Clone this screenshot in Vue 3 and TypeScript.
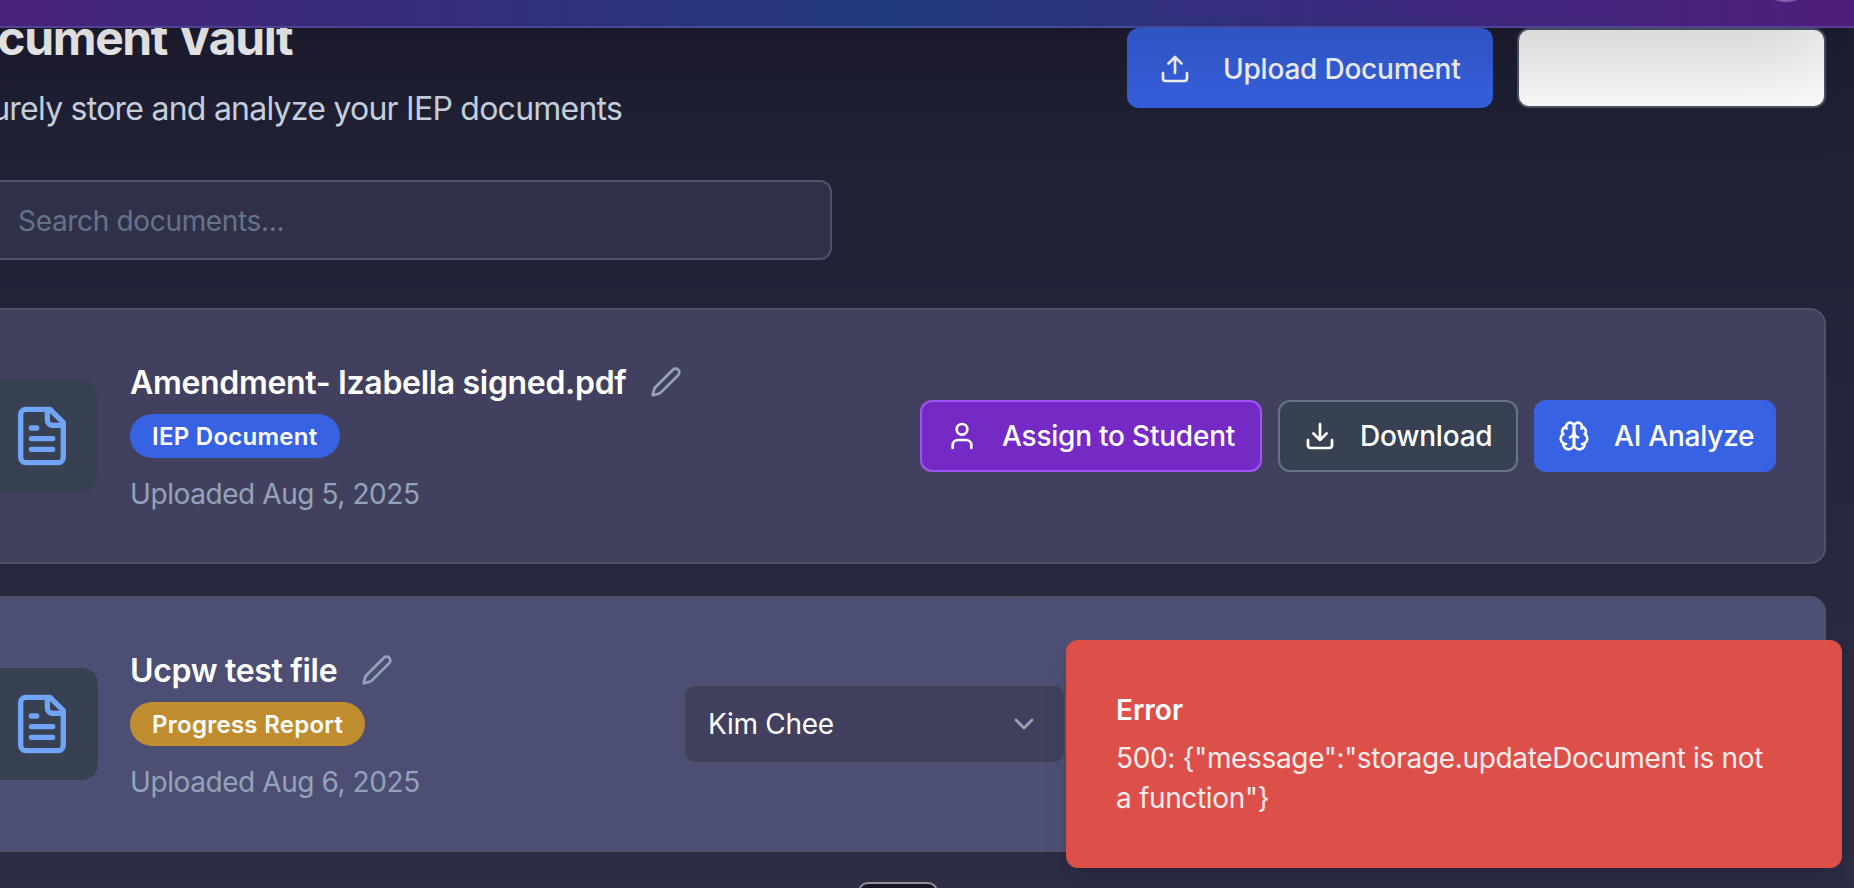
<script setup lang="ts">
interface VaultDocument {
  name: string
  kind: string
  tone: 'blue' | 'amber'
  uploaded: string
  assignee?: string
}

const documents: VaultDocument[] = [
  { name: 'Amendment- Izabella signed.pdf', kind: 'IEP Document', tone: 'blue', uploaded: 'Uploaded Aug 5, 2025' },
  { name: 'Ucpw test file', kind: 'Progress Report', tone: 'amber', uploaded: 'Uploaded Aug 6, 2025', assignee: 'Kim Chee' },
]
</script>

<template>
  <div class="screen">
    <header class="topbar">
      <span class="brand"></span>
      <nav class="tabs"><span class="tab"></span><span class="tab wide"></span></nav>
      <span class="avatar"></span>
    </header>

    <main class="page">
      <section class="heading">
        <div class="titles">
          <h1>Document Vault</h1>
          <p>Securely store and analyze your IEP documents</p>
        </div>
        <div class="heading-actions">
          <button class="btn upload">
            <svg class="icon" viewBox="0 0 24 24"><path d="M21 15v4a2 2 0 0 1-2 2H5a2 2 0 0 1-2-2v-4M17 8l-5-5-5 5M12 3v12" /></svg>
            <span>Upload Document</span>
          </button>
          <button class="btn blank"></button>
        </div>
      </section>

      <div class="search"><span>Search documents...</span></div>

      <section class="list">
        <article v-for="doc in documents" :key="doc.name" class="card" :class="{ active: doc.assignee }">
          <div class="thumb">
            <svg class="icon" viewBox="0 0 24 24"><path d="M15 2H6a2 2 0 0 0-2 2v16a2 2 0 0 0 2 2h12a2 2 0 0 0 2-2V7ZM14 2v4a2 2 0 0 0 2 2h4M10 9H8M16 13H8M16 17H8" /></svg>
          </div>
          <div class="info">
            <div class="name">
              <h3>{{ doc.name }}</h3>
              <svg class="icon pen" viewBox="0 0 24 24"><path d="M21.174 6.812a1 1 0 0 0-3.986-3.987L3.842 16.174a2 2 0 0 0-.5.83l-1.321 4.352a.5.5 0 0 0 .623.622l4.353-1.32a2 2 0 0 0 .83-.497z" /></svg>
            </div>
            <span class="badge" :class="doc.tone">{{ doc.kind }}</span>
            <p class="date">{{ doc.uploaded }}</p>
          </div>
          <div v-if="doc.assignee" class="select">
            <span>{{ doc.assignee }}</span>
            <svg class="icon" viewBox="0 0 24 24"><path d="m6 9 6 6 6-6" /></svg>
          </div>
          <div v-else class="actions">
            <button class="btn assign">
              <svg class="icon" viewBox="0 0 24 24"><path d="M19 21v-2a4 4 0 0 0-4-4H9a4 4 0 0 0-4 4v2" /><circle cx="12" cy="7" r="4" /></svg>
              <span>Assign to Student</span>
            </button>
            <button class="btn download">
              <svg class="icon" viewBox="0 0 24 24"><path d="M21 15v4a2 2 0 0 1-2 2H5a2 2 0 0 1-2-2v-4M7 10l5 5 5-5M12 15V3" /></svg>
              <span>Download</span>
            </button>
            <button class="btn analyze">
              <svg class="icon" viewBox="0 0 24 24">
                <path d="M12 5a3 3 0 1 0-5.997.125 4 4 0 0 0-2.526 5.77 4 4 0 0 0 .556 6.588A4 4 0 1 0 12 18Z" />
                <path d="M12 5a3 3 0 1 1 5.997.125 4 4 0 0 1 2.526 5.770 4 4 0 0 1-.556 6.588A4 4 0 1 1 12 18Z" />
                <path d="M15 13a4.500 4.500 0 0 1-3-4 4.500 4.500 0 0 1-3 4M17.599 6.500a3 3 0 0 0 .399-1.375M6.003 5.125A3 3 0 0 0 6.401 6.500M3.477 10.896a4 4 0 0 1 .585-.396M19.938 10.500a4 4 0 0 1 .585.396M6 18a4 4 0 0 1-1.967-.516M19.967 17.484A4 4 0 0 1 18 18" />
              </svg>
              <span>AI Analyze</span>
            </button>
          </div>
        </article>
      </section>
    </main>

    <div class="dock"></div>

    <aside class="toast">
      <strong>Error</strong>
      <p>500: {"message":"storage.updateDocument is not<br />a function"}</p>
    </aside>
  </div>
</template>

<style>
body { background: #2d2d45; overflow: hidden; }
</style>

<style scoped>
* { box-sizing: border-box; }
.screen {
  position: relative;
  height: 888px;
  overflow: hidden;
  color: #fff;
  font-family: Inter, "Liberation Sans", sans-serif;
  font-size: 28px;
  line-height: 40px;
  background: linear-gradient(#1e1e32, #2d2d46);
}
h1, h3, p { margin: 0; }
button { font: inherit; color: inherit; border: 0; }
.icon {
  width: 32px;
  height: 32px;
  flex: none;
  fill: none;
  stroke: currentColor;
  stroke-width: 2;
  stroke-linecap: round;
  stroke-linejoin: round;
}
.topbar {
  position: absolute;
  z-index: 2;
  top: -100px;
  left: -92px;
  right: -16px;
  height: 128px;
  border-bottom: 2px solid rgba(110, 120, 190, .35);
  background: linear-gradient(90deg, #4d207b, #223a80 50%, #501d7c);
  box-shadow: 0 50px 100px -24px rgba(0, 0, 0, .25);
}
.brand, .avatar { position: absolute; }
.brand { left: 20px; bottom: 24px; width: 80px; height: 80px; border-radius: 24px; background: #f08a24; }
.avatar { right: 52px; bottom: 24px; width: 64px; height: 64px; border-radius: 50%; background: #8360a8; }
.tabs { position: absolute; left: 1245px; bottom: 9px; display: flex; gap: 21px; }
.tab { width: 207px; height: 72px; border-radius: 12px; background: rgba(100, 30, 150, .1); }
.tab.wide { width: 227px; }
.page { margin-left: -64px; width: 1890px; padding-top: 28px; }
.heading { display: flex; justify-content: space-between; height: 152px; }
.titles { margin-top: -22px; white-space: nowrap; }
h1 { font-size: 48px; line-height: 64px; font-weight: 700; letter-spacing: -1.38px; }
.titles p { font-size: 32px; line-height: 48px; margin-top: 15px; color: #cbd5e1; letter-spacing: -.76px; }
.heading-actions { display: flex; gap: 24px; }
.btn { display: flex; align-items: center; height: 72px; padding: 0 24px; gap: 24px; border-radius: 12px; font-weight: 500; letter-spacing: -.22px; white-space: nowrap; }
.upload { width: 366px; height: 80px; padding: 1px 32px 0; gap: 32px; background: #3762e3; }
.blank { width: 309px; height: 80px; background: #fff; border: 2px solid #4b5563; }
.search {
  width: 896px;
  height: 80px;
  border: 2px solid #4b5568;
  border-radius: 12px;
  background: #303148;
  color: #64748b;
  padding: 19px 0 0 80px;
  letter-spacing: -.33px;
}
.list { display: grid; gap: 32px; margin-top: 48px; }
.card {
  display: flex;
  align-items: center;
  height: 256px;
  padding: 0 48px;
  border: 2px solid #4b5563;
  border-radius: 16px;
  background: #41415f;
}
.card.active { background: #4c4e73; }
.thumb { display: flex; align-items: center; justify-content: center; width: 112px; height: 112px; border-radius: 16px; background: #374151; color: #70a4f7; }
.thumb .icon { width: 64px; height: 64px; }
.info { margin-left: 32px; flex: 1; }
.name { display: flex; align-items: center; gap: 24px; height: 48px; }
h3 { padding-top: 2px; font-size: 32px; line-height: 48px; font-weight: 600; letter-spacing: -.32px; white-space: nowrap; }
.pen { color: #94a3b8; }
.badge { display: flex; align-items: center; width: max-content; height: 44px; margin-top: 8px; padding: 2px 22px 0; border-radius: 22px; font-size: 24px; font-weight: 600; letter-spacing: .27px; }
.badge.blue { background: #3762e3; }
.badge.amber { background: #c08c30; }
.date { margin-top: 16px; color: #94a3b8; letter-spacing: -.42px; }
.actions { display: flex; gap: 16px; }
.assign { width: 342px; background: #7529c5; border: 2px solid #9f56f5; }
.download { width: 240px; background: #374151; border: 2px solid #64748b; }
.analyze { width: 242px; background: #3762e3; }
.select {
  display: flex;
  align-items: center;
  justify-content: space-between;
  width: 383px;
  height: 80px;
  margin-right: 710px;
  padding: 0 24px 0 23px;
  border: 2px solid #4b5365;
  border-radius: 12px;
  background: #41415f;
  letter-spacing: -.3px;
}
.select .icon { color: #a0a0af; }
.dock { position: absolute; left: 858px; top: 882px; width: 80px; height: 60px; border: 2px solid #929099; border-radius: 10px; background: #191525; }
.toast {
  position: absolute;
  left: 1066px;
  top: 640px;
  width: 776px;
  height: 228px;
  padding: 50px;
  border-radius: 12px;
  background: #dc5049;
  box-shadow: 0 20px 30px -6px rgba(0, 0, 0, .12), 0 8px 12px -8px rgba(0, 0, 0, .1);
  white-space: nowrap;
}
.toast strong { display: block; font-weight: 600; }
.toast p { margin-top: 8px; opacity: .9; letter-spacing: -.34px; }
</style>
